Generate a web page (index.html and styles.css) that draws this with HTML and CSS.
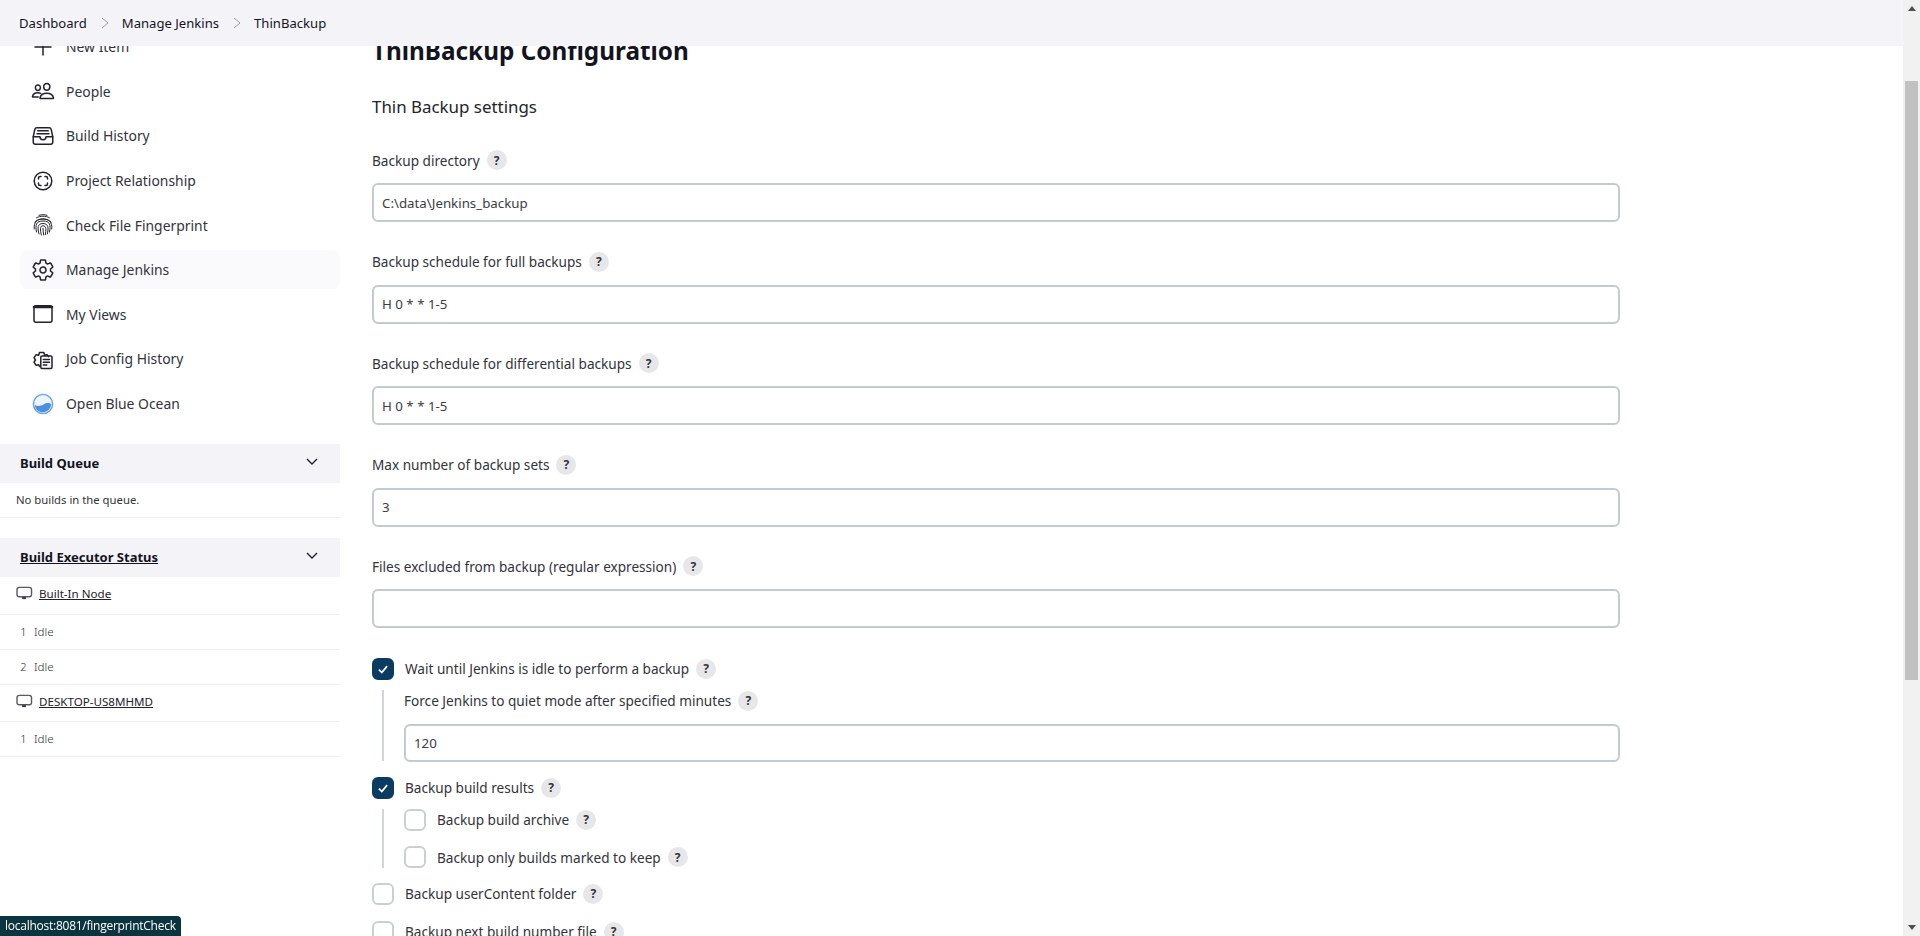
FILE: index.html
```html
<!DOCTYPE html>
<html lang="en">
<head>
    <meta charset="UTF-8">
    <meta name="viewport" content="width=device-width, initial-scale=1.0">
    <title>ThinBackup Configuration</title>
    <link rel="stylesheet" href="styles.css">
</head>
<body>
    <div class="app">
        <div class="content">
            <nav class="breadcrumbs">
                <a href="#">Dashboard</a>
                <svg class="crumb-sep" viewBox="0 0 10 14"><path d="M2 2l6 5-6 5"/></svg>
                <a href="#">Manage Jenkins</a>
                <svg class="crumb-sep" viewBox="0 0 10 14"><path d="M2 2l6 5-6 5"/></svg>
                <a href="#">ThinBackup</a>
            </nav>

            <aside class="sidebar">
                <ul class="tasks">
                    <li class="task">
                        <svg class="task-icon" viewBox="0 0 24 24"><path d="M12 4v16M4 12h16"/></svg>
                        New Item
                    </li>
                    <li class="task">
                        <svg class="task-icon ion" viewBox="0 0 512 512"><path d="M402 168c-2.930 40.670-33.100 72-66 72s-63.120-31.320-66-72c-3-42.310 26.370-72 66-72s69 30.460 66 72z"/><path d="M336 304c-65.170 0-127.840 32.370-143.540 95.410-2.080 8.340 3.150 16.590 11.720 16.590h263.650c8.570 0 13.770-8.250 11.720-16.590C463.850 335.360 401.180 304 336 304z"/><path d="M200 185.940c-2.340 32.480-26.720 58.060-53 58.060s-50.700-25.570-53-58.060C91.610 152.150 115.340 128 147 128s55.390 24.770 53 57.940z"/><path d="M206 306c-18.050-8.270-37.930-11.450-59-11.450-52 0-102.100 25.850-114.650 76.200-1.650 6.660 2.530 13.250 9.370 13.250H154"/></svg>
                        People
                    </li>
                    <li class="task">
                        <svg class="task-icon ion" viewBox="0 0 512 512"><path d="M384 80H128c-26 0-43 14-48 40L48 272v112a48 48 0 0 0 48 48h320a48 48 0 0 0 48-48V272l-32-152c-5-27-23-40-48-40z"/><path d="M48 272h144M320 272h144M192 272a64 64 0 0 0 128 0M144 144h224M128 208h256"/></svg>
                        Build History
                    </li>
                    <li class="task">
                        <svg class="task-icon" viewBox="0 0 24 24"><circle cx="12" cy="12" r="8.800"/><path d="M7.500 10V9a1.500 1.500 0 0 1 1.500-1.500h1M14 7.500h1A1.500 1.500 0 0 1 16.500 9v1M16.500 14v1a1.500 1.500 0 0 1-1.500 1.500h-1M10 16.500H9A1.500 1.500 0 0 1 7.500 15v-1"/></svg>
                        Project Relationship
                    </li>
                    <li class="task">
                        <svg class="task-icon task-icon-thin" viewBox="0 0 24 24"><path d="M8 2.300c2.600-.8 5.400-.8 8 0M5.500 4.800c4-2.200 9-2.200 13 0M3.800 9c3.500-4.200 12.900-4.200 16.400 0M3.200 16c-.8-7 3.300-10 8.800-10s9.600 3 8.800 10M5.500 19c-1.500-7-.5-11 6.500-11s8 4 6.500 11M8 21c-1.800-6-1.500-10.500 4-10.500s5.800 4.500 4.300 10.500M10.300 22c-1-5-1.800-9.200 1.700-9.200s3.200 4 2.300 8.800M12 15.500c0 2.500.3 4.500.7 6.500"/></svg>
                        Check File Fingerprint
                    </li>
                    <li class="task task-hover">
                        <svg class="task-icon ion" viewBox="0 0 512 512"><path d="M262.290 192.310a64 64 0 1 0 57.400 57.400 64.130 64.130 0 0 0-57.400-57.400zM416.390 256a154.340 154.340 0 0 1-1.530 20.790l45.210 35.460a10.810 10.810 0 0 1 2.450 13.750l-42.770 74a10.810 10.810 0 0 1-13.140 4.590l-44.900-18.080a16.110 16.110 0 0 0-15.170 1.750A164.480 164.480 0 0 1 325 400.800a15.940 15.940 0 0 0-8.820 12.140l-6.730 47.890a11.080 11.080 0 0 1-10.680 9.170h-85.540a11.110 11.110 0 0 1-10.690-8.870l-6.720-47.820a16.070 16.070 0 0 0-9-12.220 155.300 155.300 0 0 1-21.460-12.570 16 16 0 0 0-15.110-1.710l-44.890 18.070a10.810 10.810 0 0 1-13.140-4.580l-42.770-74a10.800 10.800 0 0 1 2.450-13.750l38.210-30a16.050 16.050 0 0 0 6-14.080c-.36-4.170-.58-8.330-.58-12.500s.21-8.270.58-12.350a16 16 0 0 0-6.070-13.940l-38.190-30A10.810 10.810 0 0 1 49.480 186l42.770-74a10.810 10.810 0 0 1 13.140-4.590l44.900 18.080a16.110 16.110 0 0 0 15.170-1.750A164.480 164.480 0 0 1 187 111.200a15.940 15.940 0 0 0 8.820-12.140l6.730-47.890A11.080 11.080 0 0 1 213.230 42h85.540a11.110 11.110 0 0 1 10.690 8.870l6.720 47.820a16.070 16.070 0 0 0 9 12.220 155.300 155.300 0 0 1 21.460 12.570 16 16 0 0 0 15.110 1.710l44.890-18.070a10.810 10.810 0 0 1 13.140 4.580l42.770 74a10.800 10.800 0 0 1-2.450 13.750l-38.210 30a16.050 16.050 0 0 0-6.050 14.080c.33 4.140.55 8.300.55 12.470z"/></svg>
                        Manage Jenkins
                    </li>
                    <li class="task">
                        <svg class="task-icon" viewBox="0 0 24 24"><rect x="3" y="3.800" width="18" height="16.400" rx="2"/><path class="icon-bar" d="M3 5h18"/></svg>
                        My Views
                    </li>
                    <li class="task">
                        <svg class="task-icon" viewBox="0 0 24 24"><path d="M8.500 19.500l-.9-1.800-2.400.7-2.200-3.200 1.500-2.200-1.500-2.300 2.200-3.100 2.400.7.900-2.800h4.300l.9 2.800 2.400-.7 1.500 2"/><rect x="9.800" y="9" width="11.200" height="12.500" rx="1.200"/><path d="M12.300 12.500h6.200M12.300 15.200h6.200M12.300 18h3.500"/></svg>
                        Job Config History
                    </li>
                    <li class="task">
                        <svg class="task-icon-ocean" viewBox="0 0 24 24"><circle cx="12" cy="12" r="10.500"/><path d="M3 13c3 1.500 6 1.500 9.500-.5s6-2 8.500-.5c-.5 5-4 9-9 9s-8.500-3.500-9-8z"/></svg>
                        Open Blue Ocean
                    </li>
                </ul>

                <section class="pane">
                    <header class="pane-header">
                        <span>Build Queue</span>
                        <svg class="chevron" viewBox="0 0 14 10"><path d="M2 2l5 5 5-5"/></svg>
                    </header>
                    <div class="pane-row pane-empty">No builds in the queue.</div>
                </section>

                <section class="pane">
                    <header class="pane-header">
                        <a href="#">Build Executor Status</a>
                        <svg class="chevron" viewBox="0 0 14 10"><path d="M2 2l5 5 5-5"/></svg>
                    </header>
                    <div class="pane-row node-row">
                        <svg class="computer" viewBox="0 0 18 16"><rect x="1" y="1.500" width="15.500" height="10" rx="2.500"/><path class="computer-foot" d="M6.500 12.800h4"/></svg>
                        <a href="#">Built-In Node</a>
                    </div>
                    <div class="pane-row exec-row"><span class="exec-num">1</span>Idle</div>
                    <div class="pane-row exec-row"><span class="exec-num">2</span>Idle</div>
                    <div class="pane-row node-row">
                        <svg class="computer" viewBox="0 0 18 16"><rect x="1" y="1.500" width="15.500" height="10" rx="2.500"/><path class="computer-foot" d="M6.500 12.800h4"/></svg>
                        <a href="#">DESKTOP-US8MHMD</a>
                    </div>
                    <div class="pane-row exec-row"><span class="exec-num">1</span>Idle</div>
                </section>
            </aside>

            <main class="main">
                <h1>ThinBackup Configuration</h1>
                <h2>Thin Backup settings</h2>

                <div class="field">
                    <div class="field-label">Backup directory <span class="help">?</span></div>
                    <input class="text-input" type="text" value="C:\data\Jenkins_backup">
                </div>
                <div class="field">
                    <div class="field-label">Backup schedule for full backups <span class="help">?</span></div>
                    <input class="text-input" type="text" value="H 0 * * 1-5">
                </div>
                <div class="field">
                    <div class="field-label">Backup schedule for differential backups <span class="help">?</span></div>
                    <input class="text-input" type="text" value="H 0 * * 1-5">
                </div>
                <div class="field">
                    <div class="field-label">Max number of backup sets <span class="help">?</span></div>
                    <input class="text-input" type="text" value="3">
                </div>
                <div class="field">
                    <div class="field-label">Files excluded from backup (regular expression) <span class="help">?</span></div>
                    <input class="text-input" type="text" value="">
                </div>

                <div class="check check-first">
                    <span class="box box-on"><svg viewBox="0 0 12 12"><path d="M2.500 6.500l2.500 2.500 4.500-5.500"/></svg></span>
                    <span>Wait until Jenkins is idle to perform a backup</span>
                    <span class="help">?</span>
                </div>
                <div class="nested nested-field">
                    <div class="field-label">Force Jenkins to quiet mode after specified minutes <span class="help">?</span></div>
                    <input class="text-input" type="text" value="120">
                </div>

                <div class="check check-second">
                    <span class="box box-on"><svg viewBox="0 0 12 12"><path d="M2.500 6.500l2.500 2.500 4.500-5.500"/></svg></span>
                    <span>Backup build results</span>
                    <span class="help">?</span>
                </div>
                <div class="nested nested-checks">
                    <div class="check"><span class="box"></span><span>Backup build archive</span><span class="help">?</span></div>
                    <div class="check"><span class="box"></span><span>Backup only builds marked to keep</span><span class="help">?</span></div>
                </div>
                <div class="check check-third"><span class="box"></span><span>Backup userContent folder</span><span class="help">?</span></div>
                <div class="check check-fourth"><span class="box"></span><span>Backup next build number file</span><span class="help">?</span></div>
            </main>
        </div>

        <div class="scrollbar">
            <div class="scroll-arrow scroll-up"></div>
            <div class="scroll-thumb"></div>
            <div class="scroll-arrow scroll-down"></div>
        </div>
    </div>

    <div class="status-url">localhost:8081/fingerprintCheck</div>
</body>
</html>
```

FILE: styles.css
```css
html, body {
    height: 100%;
    margin: 0;
    overflow: hidden;
    background-color: #fff;
    color: #14141f;
    font-family: "Noto Sans", Arial, sans-serif;
    font-size: 13.6px;
}
a {
    color: inherit;
}
.app {
    display: flex;
    height: 936px;
}
.content {
    position: relative;
    flex: 1;
    display: flex;
    overflow: hidden;
}

/* breadcrumb bar lies over the scrolled page */
.breadcrumbs {
    position: absolute;
    top: 0;
    left: 0;
    right: 0;
    z-index: 2;
    height: 46px;
    padding-left: 19px;
    display: flex;
    align-items: center;
    background-color: #f4f4f8;
    font-size: 13.1px;
}
.breadcrumbs a {
    text-decoration: none;
}
.crumb-sep {
    width: 10px;
    height: 14px;
    margin: 0 12px 0 13px;
    fill: none;
    stroke: #9b9ba3;
    stroke-width: 1;
}

/* sidebar */
.sidebar {
    width: 340px;
    flex-shrink: 0;
    padding-top: 24.5px;
}
.tasks {
    list-style: none;
    margin: 0;
    padding: 0;
}
.task {
    height: 44.6px;
    margin-left: 20px;
    padding-left: 11px;
    display: flex;
    align-items: center;
    gap: 11px;
    color: #33333b;
    font-size: 13.9px;
    border-radius: 8px;
}
.task-hover {
    height: 39px;
    margin-top: 2.8px;
    margin-bottom: 2.8px;
    background-color: #fafafc;
}
.task-icon {
    width: 24px;
    height: 24px;
    flex-shrink: 0;
    fill: none;
    stroke: #22222a;
    stroke-width: 1.5;
    stroke-linecap: round;
    stroke-linejoin: round;
}
.ion {
    stroke-width: 32;
}
.task-icon-thin {
    stroke-width: 1;
}
.icon-bar {
    stroke-width: 2.6;
}
.task-icon-ocean {
    width: 22px;
    height: 22px;
    margin: 0 1px;
    flex-shrink: 0;
    fill: #4a90dc;
}
.task-icon-ocean circle {
    fill: #eef4fb;
    stroke: #6aa5e6;
    stroke-width: 1.6;
}
.pane {
    margin-bottom: 20px;
}
.tasks + .pane {
    margin-top: 17.8px;
}
.pane-header {
    height: 39px;
    padding: 0 20px 0 20px;
    display: flex;
    align-items: center;
    justify-content: space-between;
    background-color: #f3f3f8;
    font-weight: 700;
    font-size: 13px;
}
.chevron {
    width: 14px;
    height: 10px;
    margin-right: 1px;
    margin-top: -3px;
    fill: none;
    stroke: #22222a;
    stroke-width: 1.4;
}
.pane-row {
    display: flex;
    align-items: center;
    box-sizing: border-box;
    border-bottom: 1px solid #f0f0f3;
    font-size: 11.6px;
    color: #33333b;
}
.pane-empty {
    height: 35px;
    padding-left: 16px;
    font-size: 11.3px;
}
.node-row {
    height: 37px;
    padding-left: 16px;
    padding-bottom: 3px;
    gap: 6px;
    color: #22222a;
}
.pane-header + .node-row {
    height: 38px;
}
.exec-row {
    height: 35px;
    padding-left: 20px;
    font-weight: 300;
}
.exec-num {
    width: 14px;
}
.computer {
    width: 17px;
    height: 15px;
    fill: none;
    stroke: #5a5a64;
    stroke-width: 1.5;
}
.computer-foot {
    stroke-width: 2.4;
    stroke: #3a3a44;
}

/* form */
.main {
    flex: 1;
    padding: 35px 0 0 32px;
    max-width: 1248px;
}
h1 {
    margin: 0;
    font-size: 24.3px;
    line-height: 32px;
    font-weight: 700;
}
h2 {
    margin: 28px 0 0;
    font-size: 16.9px;
    line-height: 24px;
    font-weight: 400;
    color: #24242c;
}
.field {
    margin-top: 30px;
}
.field + .field {
    margin-top: 28.6px;
}
.field-label {
    height: 22px;
    display: flex;
    align-items: center;
    color: #33333b;
}
.help {
    width: 20px;
    height: 20px;
    margin-left: 7px;
    border-radius: 50%;
    background-color: #e7e7ea;
    display: inline-flex;
    align-items: center;
    justify-content: center;
    font-size: 12px;
    font-weight: 700;
    color: #33333b;
}
.text-input {
    display: block;
    width: 100%;
    height: 39px;
    margin-top: 12px;
    box-sizing: border-box;
    padding: 0 8px;
    border: 2px solid #c3cbce;
    border-radius: 6px;
    background-color: #fff;
    font-family: inherit;
    font-size: 13.3px;
    color: #3c3c44;
    outline: none;
}
.check {
    height: 22px;
    display: flex;
    align-items: center;
    color: #33333b;
}
.box {
    width: 22px;
    height: 22px;
    margin-right: 11px;
    flex-shrink: 0;
    box-sizing: border-box;
    border: 2px solid #c9d0d4;
    border-radius: 6px;
    display: flex;
    align-items: center;
    justify-content: center;
}
.box-on {
    border-color: #0b3b60;
    background-color: #0b3b60;
}
.box-on svg {
    width: 14px;
    height: 14px;
    fill: none;
    stroke: #fff;
    stroke-width: 1.5;
}
.check-first {
    margin-top: 29.6px;
}
.nested {
    margin-left: 10px;
    padding-left: 20px;
    border-left: 2px solid #d0d5d8;
}
.nested-field {
    margin-top: 10px;
    height: 71px;
}
.nested-field .text-input {
    height: 38px;
    margin-top: 12px;
}
.check-second {
    margin-top: 16px;
}
.nested-checks {
    margin-top: 10px;
    height: 59.5px;
}
.nested-checks .check + .check {
    margin-top: 15.5px;
}
.check-third {
    margin-top: 14.5px;
}
.check-fourth {
    margin-top: 16px;
}

/* scrollbar of the window */
.scrollbar {
    width: 17px;
    flex-shrink: 0;
    background-color: #f1f1f1;
    display: flex;
    flex-direction: column;
}
.scroll-arrow {
    height: 17px;
    flex-shrink: 0;
    display: flex;
    align-items: center;
    justify-content: center;
}
.scroll-arrow::before {
    content: "";
    border-left: 4px solid transparent;
    border-right: 4px solid transparent;
}
.scroll-up::before {
    border-bottom: 5px solid #505050;
}
.scroll-down::before {
    border-top: 5px solid #505050;
}
.scroll-thumb {
    height: 599px;
    margin: 64px 2px auto;
    background-color: #c1c1c1;
}

/* browser status bubble */
.status-url {
    position: fixed;
    left: 0;
    bottom: 0;
    height: 20px;
    padding: 0 5px;
    line-height: 20px;
    background-color: #0a3440;
    color: #fff;
    font-family: "Open Sans", Arial, sans-serif;
    font-size: 12px;
    letter-spacing: -0.25px;
    border-top-right-radius: 4px;
}
```
